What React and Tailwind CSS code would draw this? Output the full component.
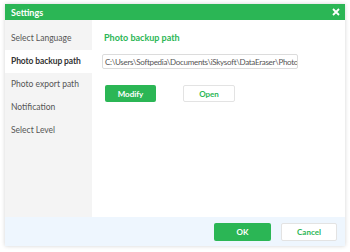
export default function App() {
  const items = ['Select Language', 'Photo backup path', 'Photo export path', 'Notification', 'Select Level'];
  const active = 1;

  return (
    <div className="w-[350px] h-[252px] bg-white pt-[4px] pl-[5px] font-['Lato',sans-serif]">
      <div className="w-[340px] h-[242px] flex flex-col bg-white shadow-[0_0_4px_rgba(0,0,0,0.18)]">
        {/* Title bar */}
        <div className="h-[16px] bg-[#2bb655] flex items-center justify-between pl-[6px] pr-[5px]">
          <span className="text-white text-[9px] font-bold leading-none">Settings</span>
          <svg width="8" height="8" viewBox="0 0 8 8">
            <path d="M1 1L7 7M7 1L1 7" stroke="white" strokeWidth="1.8" />
          </svg>
        </div>

        <div className="flex flex-1">
          {/* Sidebar */}
          <div className="w-[87px] bg-[#f4f4f4] pt-[7px] flex flex-col">
            {items.map((item, i) => (
              <div
                key={item}
                className={`h-[23px] flex items-center pl-[6px] text-[8.5px] whitespace-nowrap ${
                  i === active ? 'bg-white font-bold text-[#333] w-[96px] relative z-10 tracking-[-0.1px]' : 'text-[#555]'
                }`}
              >
                {item}
              </div>
            ))}
          </div>

          {/* Content */}
          <div className="flex-1 pl-[10px] pt-[13px]">
            <div className="text-[9px] font-bold text-[#2bb655] leading-none pl-[2px]">Photo backup path</div>
            <div className="mt-[12px] w-[196px] h-[15px] border border-[#dcdcdc] rounded-[2px] flex items-center px-[2px] overflow-hidden">
              <span className="text-[8px] text-[#555] whitespace-nowrap leading-none tracking-[-0.3px]">
                C:\Users\Softpedia\Documents\iSkysoft\DataEraser\PhotoBackup
              </span>
            </div>
            <div className="mt-[16px] flex gap-[27px] pl-[3px]">
              <button className="w-[51px] h-[17px] bg-[#2bb655] rounded-[2px] text-white text-[8px] font-bold">Modify</button>
              <button className="w-[52px] h-[17px] bg-white border border-[#e3e3e3] rounded-[2px] text-[#2bb655] text-[8px] font-bold">Open</button>
            </div>
          </div>
        </div>

        {/* Footer */}
        <div className="h-[29px] bg-[#eef6fe] flex items-center justify-end gap-[10px] pr-[8px]">
          <button className="w-[57px] h-[18px] bg-[#2bb655] rounded-[2px] text-white text-[8px] font-bold">OK</button>
          <button className="w-[56px] h-[18px] bg-white border border-[#e3e3e3] rounded-[2px] text-[#2bb655] text-[8px] font-bold">Cancel</button>
        </div>
      </div>
    </div>
  );
}
